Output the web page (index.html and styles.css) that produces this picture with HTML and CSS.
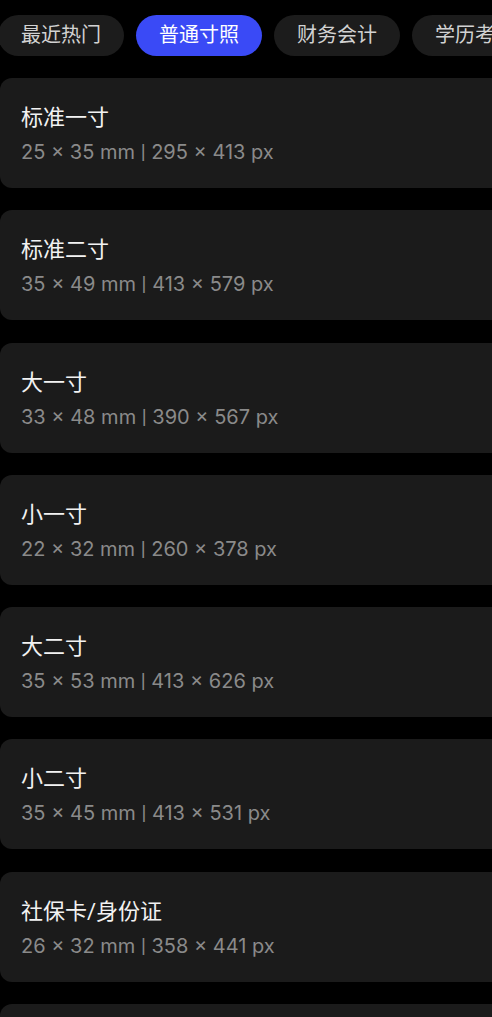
FILE: index.html
```html
<!DOCTYPE html>
<html lang="zh-CN">
<head>
    <meta charset="UTF-8">
    <meta name="viewport" content="width=device-width, initial-scale=1.0">
    <title>证件照尺寸</title>
    <link rel="stylesheet" href="styles.css">
</head>
<body>
    <div class="tabs">
        <div class="tab">最近热门</div>
        <div class="tab active">普通寸照</div>
        <div class="tab">财务会计</div>
        <div class="tab">学历考试</div>
    </div>

    <div class="size-list">
        <div class="size-card">
            <div class="size-name">标准一寸</div>
            <div class="size-spec">25 × 35 mm <span class="sep">|</span> 295 × 413 px</div>
        </div>
        <div class="size-card">
            <div class="size-name">标准二寸</div>
            <div class="size-spec">35 × 49 mm <span class="sep">|</span> 413 × 579 px</div>
        </div>
        <div class="size-card">
            <div class="size-name">大一寸</div>
            <div class="size-spec">33 × 48 mm <span class="sep">|</span> 390 × 567 px</div>
        </div>
        <div class="size-card">
            <div class="size-name">小一寸</div>
            <div class="size-spec">22 × 32 mm <span class="sep">|</span> 260 × 378 px</div>
        </div>
        <div class="size-card">
            <div class="size-name">大二寸</div>
            <div class="size-spec">35 × 53 mm <span class="sep">|</span> 413 × 626 px</div>
        </div>
        <div class="size-card">
            <div class="size-name">小二寸</div>
            <div class="size-spec">35 × 45 mm <span class="sep">|</span> 413 × 531 px</div>
        </div>
        <div class="size-card">
            <div class="size-name">社保卡/身份证</div>
            <div class="size-spec">26 × 32 mm <span class="sep">|</span> 358 × 441 px</div>
        </div>
        <!-- 下一项在屏幕外，只露出顶部 -->
        <div class="size-card"></div>
    </div>
</body>
</html>
```

FILE: styles.css
```css
html, body {
    margin: 0;
    padding: 0;
    background: #000;
    overflow: hidden;
}
body {
    font-family: Roboto, "Noto Sans CJK SC", sans-serif;
    width: 492px;
    height: 1017px;
}
.tabs {
    display: flex;
    gap: 12px;
    padding-top: 15px;
    margin-left: -2px;
    white-space: nowrap;
}
.tab {
    flex: none;
    height: 41px;
    line-height: 41px;
    padding: 0 23px;
    border-radius: 21px;
    background: #1c1c1c;
    color: #d2d2d2;
    font-size: 20px;
}
.tab.active {
    background: #3a4af6;
    color: #fff;
}
.size-list {
    display: flex;
    flex-direction: column;
    gap: 22.3px;
    margin-top: 22px;
}
.size-card {
    width: 540px;
    height: 110px;
    box-sizing: border-box;
    padding-left: 21px;
    border-radius: 12px;
    background: #1b1b1b;
    display: flex;
    flex-direction: column;
    justify-content: center;
    gap: 4px;
}
.size-name {
    color: #f2f2f2;
    font-size: 22px;
    line-height: 30px;
    margin-top: 4px;
}
.size-spec {
    font-family: Inter, "Noto Sans CJK SC", sans-serif;
    color: #8a8a8a;
    font-size: 20px;
    line-height: 30px;
}
.size-spec .sep {
    font-family: Roboto, sans-serif;
}
```
